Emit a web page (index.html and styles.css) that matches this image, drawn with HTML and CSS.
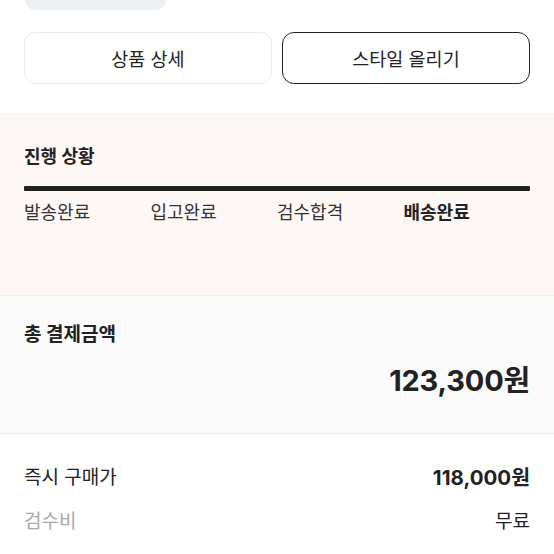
FILE: index.html
```html
<!DOCTYPE html>
<html lang="ko">
<head>
<meta charset="utf-8">
<link rel="stylesheet" href="styles.css">
</head>
<body>
<div class="pill"></div>
<div class="buttons">
  <div class="btn light">상품 상세</div>
  <div class="btn dark">스타일 올리기</div>
</div>
<section class="progress">
  <div class="title">진행 상황</div>
  <div class="bar"></div>
  <div class="steps">
    <div class="step">발송완료</div>
    <div class="step">입고완료</div>
    <div class="step">검수합격</div>
    <div class="step active">배송완료</div>
  </div>
</section>
<section class="total">
  <div class="title">총 결제금액</div>
  <div class="amount">123,300원</div>
</section>
<section class="details">
  <div class="row"><span class="label">즉시 구매가</span><span class="value bold">118,000원</span></div>
  <div class="row"><span class="label gray">검수비</span><span class="value">무료</span></div>
  <div class="row"><span class="label gray">수수료</span><span class="value">5,300원</span></div>
</section>
</body>
</html>
```
FILE: styles.css
```css
html, body {
  margin: 0;
  padding: 0;
  background: #ffffff;
  font-family: Inter, "Noto Sans CJK KR", sans-serif;
  color: #222222;
}
.pill {
  width: 141px;
  height: 10px;
  margin-left: 25px;
  background: #edf0f3;
  border-radius: 0 0 10px 10px;
}
.buttons {
  display: flex;
  gap: 10px;
  padding: 0 24px;
  margin-top: 22px;
}
.btn {
  flex: 1;
  height: 52px;
  box-sizing: border-box;
  border-radius: 12px;
  display: flex;
  align-items: center;
  justify-content: center;
  font-size: 18.5px;
  color: #222;
}
.btn.light {
  border: 1px solid #ebebeb;
}
.btn.dark {
  border: 1px solid #222;
}
.progress {
  margin-top: 30px;
  border-top: 1px solid #f1eeee;
  background: #fdf7f6;
  height: 181px;
  padding: 30px 24px 0;
  box-sizing: border-box;
}
.progress .title {
  font-size: 18px;
  font-weight: 700;
  line-height: 24px;
}
.bar {
  height: 5px;
  background: #222;
  margin-top: 17px;
  border-radius: 1px;
}
.steps {
  display: grid;
  grid-template-columns: repeat(4, 1fr);
  margin-top: 9px;
}
.step {
  font-size: 18px;
  line-height: 26px;
  color: #333;
}
.step.active {
  font-weight: 700;
  color: #222;
}
.total {
  border-top: 1px solid #eeeeee;
  border-bottom: 1px solid #eeeeee;
  background: #fafafa;
  height: 139px;
  box-sizing: border-box;
  padding: 26px 24px 0;
}
.total .title {
  font-size: 19px;
  font-weight: 700;
  line-height: 26px;
}
.amount {
  margin-top: 15px;
  text-align: right;
  font-size: 29px;
  font-weight: 700;
  line-height: 36px;
  letter-spacing: -0.2px;
}
.details {
  padding: 30px 24px 0;
  display: flex;
  flex-direction: column;
  gap: 16px;
}
.row {
  display: flex;
  justify-content: space-between;
  font-size: 19px;
  line-height: 28px;
}
.label.gray {
  color: #a9a9a9;
}
.value.bold {
  font-weight: 700;
  font-size: 20.5px;
}
```
